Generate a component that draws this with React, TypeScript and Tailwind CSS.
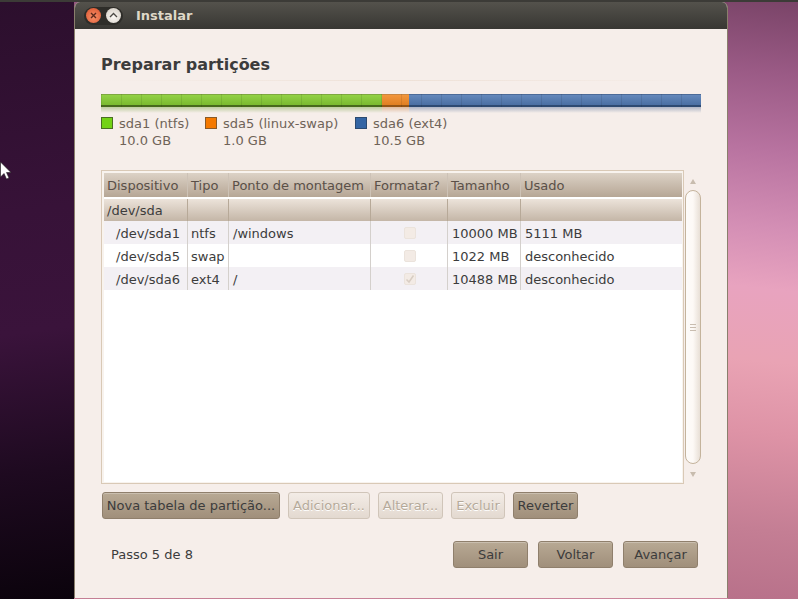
import React from "react";

const btnOn = "h-[27px] rounded-[3px] border border-[#8f7f6c] bg-gradient-to-b from-[#b8a994] to-[#a08f7b] text-[#3c3c3c] flex items-center justify-center shadow-[inset_0_1px_0_rgba(255,255,255,0.25)]";
const btnOff = "h-[27px] rounded-[3px] border border-[#d0c5b9] bg-gradient-to-b from-[#f3ece6] to-[#e3d9d0] text-[#b5a999] [text-shadow:0_1px_0_#ffffff] flex items-center justify-center";

const cols = ["w-[84px]", "w-[41px]", "w-[142px]", "w-[77px]", "w-[73px]", "flex-1"];
const headers = ["Dispositivo", "Tipo", "Ponto de montagem", "Formatar?", "Tamanho", "Usado"];

const Check = ({ checked }: { checked?: boolean }) => (
  <div className="w-[12px] h-[12px] rounded-[2px] border border-[#ebe3dc] bg-[#f3ebe5] flex items-center justify-center">
    {checked && (
      <svg width="10" height="10" viewBox="0 0 10 10">
        <path d="M1.5 5.5 L4 8 L8.5 1.5" fill="none" stroke="#d8cdc3" strokeWidth="1.5" />
      </svg>
    )}
  </div>
);

const rows = [
  { d: "/dev/sda1", t: "ntfs", p: "/windows", s: "10000 MB", u: "5111 MB", bg: "bg-[#f3f0f4]" },
  { d: "/dev/sda5", t: "swap", p: "", s: "1022 MB", u: "desconhecido", bg: "bg-white" },
  { d: "/dev/sda6", t: "ext4", p: "/", s: "10488 MB", u: "desconhecido", bg: "bg-[#f3f0f4]", checked: true },
];

const Legend = ({ color, border, name, size, w }: { color: string; border: string; name: string; size: string; w: string }) => (
  <div className={`flex ${w}`}>
    <div className={`w-[12px] h-[12px] mt-[1px] border ${color} ${border}`} />
    <div className="ml-[6px] text-[#6f6358] leading-[17px] -mt-[1px]">
      <div>{name}</div>
      <div>{size}</div>
    </div>
  </div>
);

export default function App() {
  return (
    <div className="relative w-[798px] h-[599px] overflow-hidden flex flex-col bg-[#3c3b37] text-[13px]" style={{ fontFamily: '"DejaVu Sans", sans-serif' }}>
      <div className="h-[2px] shrink-0 bg-[#3c3b37]" />
      <div className="flex flex-1 min-h-0">
        <div className="w-[74px] shrink-0 bg-[linear-gradient(172deg,#2c0f2d_0%,#371238_35%,#3a133b_55%,#1e0a20_78%,#0b030c_100%)]" />

        <div className="w-[654px] shrink-0 flex flex-col bg-[linear-gradient(186deg,#7a4468_0%,#b873a0_25%,#e8a3bf_50%,#c47e94_100%)]">
          <div className="h-[596px] flex flex-col rounded-t-[6px] overflow-hidden border-x border-[#8a7f6c] bg-[#f6eeea]">
            <div className="h-[27px] shrink-0 flex items-center bg-gradient-to-b from-[#54524c] to-[#383733] pl-[9px]">
              <div className="flex items-center gap-[5px] h-[18px] px-[2px] rounded-full bg-[#2e2d29]">
                <div className="w-[15px] h-[15px] rounded-full bg-[radial-gradient(circle_at_50%_60%,#f89068,#d9512c)] flex items-center justify-center">
                  <svg width="7" height="7" viewBox="0 0 7 7"><path d="M1 1 L6 6 M6 1 L1 6" stroke="#5d2a1c" strokeWidth="1.4" /></svg>
                </div>
                <div className="w-[15px] h-[15px] rounded-full bg-[radial-gradient(circle_at_50%_60%,#fbf8f4,#cfc9bf)] flex items-center justify-center">
                  <svg width="9" height="7" viewBox="0 0 9 7"><path d="M1 5 L4.5 1.5 L8 5" fill="none" stroke="#4a4843" strokeWidth="1.3" /></svg>
                </div>
              </div>
              <span className="ml-[13px] mt-[1px] font-bold text-[#dfd8c8]">Instalar</span>
            </div>

            <div className="flex-1 flex flex-col pl-[26px] pr-[26px]">
              <div className="mt-[26px] text-[16px] font-bold leading-[19px] text-[#3c3c3c]">Preparar partições</div>
              <div className="mt-[6px] h-px bg-gradient-to-r from-[#f6eeea] via-[#eee1d7] to-[#f6eeea]" />

              <div className="relative mt-[13px] flex h-[13px] w-[600px]">
                <div className="w-[281px] border-t border-b-2 border-t-[#7ea83f] border-b-[#47691c] bg-gradient-to-b from-[#92d145] to-[#7aba2f]" />
                <div className="w-[27px] border-t border-b-2 border-t-[#c98540] border-b-[#955516] bg-gradient-to-b from-[#f2963c] to-[#e07f22]" />
                <div className="flex-1 border-t border-b-2 border-t-[#4c6b98] border-b-[#2d4a72] bg-gradient-to-b from-[#6488bb] to-[#4a6fa3]" />
                <div className="absolute inset-0 [background-position:1px_0] bg-[repeating-linear-gradient(90deg,transparent_0,transparent_19px,rgba(0,0,0,0.09)_19px,rgba(0,0,0,0.09)_20px)]" />
              </div>
              <div className="flex h-[6px] w-[600px] opacity-40">
                <div className="w-[281px] bg-gradient-to-b from-[#6a9a30] to-transparent" />
                <div className="w-[27px] bg-gradient-to-b from-[#c07030] to-transparent" />
                <div className="flex-1 bg-gradient-to-b from-[#44618f] to-transparent" />
              </div>

              <div className="mt-[3px] flex">
                <Legend w="w-[104px]" color="bg-[#73d216]" border="border-[#4a6f24]" name="sda1 (ntfs)" size="10.0 GB" />
                <Legend w="w-[150px]" color="bg-[#f57900]" border="border-[#8a5a28]" name="sda5 (linux-swap)" size="1.0 GB" />
                <Legend w="w-[120px]" color="bg-[#3465a4]" border="border-[#2c4a70]" name="sda6 (ext4)" size="10.5 GB" />
              </div>

              <div className="mt-[21px] flex h-[314px]">
                <div className="w-[583px] border border-[#d9c9b6] pl-[2px] pt-[2px] pr-[1px] pb-[1px] bg-[#f8f3ee] flex flex-col">
                  <div className="flex-1 bg-white flex flex-col">
                    <div className="flex h-[24px] bg-gradient-to-b from-[#dcd2c6] to-[#b6a695] text-[#5a5048]">
                      {headers.map((h, i) => (
                        <div key={h} className={`${cols[i]} border-r border-[#cdc2b6] last:border-r-0 pl-[3px] pt-[2px] flex items-center`}>{h}</div>
                      ))}
                    </div>
                    <div className="flex h-[22px] mt-[2px] bg-gradient-to-b from-[#ece3da] to-[#c4b6a7] text-[#3c3c3c]">
                      {headers.map((h, i) => (
                        <div key={h} className={`${cols[i]} border-r border-[#b7a998] last:border-r-0 pl-[3px] pt-[2px] flex items-center`}>{i === 0 ? "/dev/sda" : ""}</div>
                      ))}
                    </div>
                    {rows.map((r) => (
                      <div key={r.d} className={`flex h-[23px] text-[#3c3c3c] ${r.bg}`}>
                        <div className={`${cols[0]} border-r border-[#d4d0cc] pl-[12px] pt-[2px] flex items-center`}>{r.d}</div>
                        <div className={`${cols[1]} border-r border-[#d4d0cc] pl-[3px] pt-[2px] flex items-center`}>{r.t}</div>
                        <div className={`${cols[2]} border-r border-[#d4d0cc] pl-[4px] pt-[2px] flex items-center`}>{r.p}</div>
                        <div className={`${cols[3]} border-r border-[#d4d0cc] pl-[2px] pt-[1px] flex items-center justify-center`}><Check checked={r.checked} /></div>
                        <div className={`${cols[4]} border-r border-[#d4d0cc] pl-[4px] pt-[2px] flex items-center`}>{r.s}</div>
                        <div className={`${cols[5]} pl-[4px] pt-[2px] flex items-center`}>{r.u}</div>
                      </div>
                    ))}
                  </div>
                </div>
                <div className="w-[16px] ml-[1px] flex flex-col items-center">
                  <div className="mt-[9px] w-0 h-0 border-x-[3px] border-x-transparent border-b-[5px] border-b-[#c8bcae]" />
                  <div className="mt-[6px] w-[16px] h-[274px] rounded-[8px] border border-[#c4b39c] bg-gradient-to-r from-[#fdfbf9] via-[#fdf9f6] to-[#e8dfd6] flex items-center justify-center">
                    <div className="mt-[1px] w-[6px] h-[7px] bg-[repeating-linear-gradient(180deg,#c9bdb0_0,#c9bdb0_1px,transparent_1px,transparent_3px)]" />
                  </div>
                  <div className="mt-[8px] w-0 h-0 border-x-[3px] border-x-transparent border-t-[5px] border-t-[#c8bcae]" />
                </div>
              </div>

              <div className="mt-[8px] ml-[1px] flex">
                <div className={`${btnOn} w-[178px]`}>Nova tabela de partição...</div>
                <div className={`${btnOff} w-[82px] ml-[8px]`}>Adicionar...</div>
                <div className={`${btnOff} w-[65px] ml-[8px]`}>Alterar...</div>
                <div className={`${btnOff} w-[54px] ml-[8px]`}>Excluir</div>
                <div className={`${btnOn} w-[65px] ml-[8px]`}>Reverter</div>
              </div>

              <div className="mt-[22px] flex items-center pr-[3px]">
                <div className="ml-[10px] flex-1 text-[#3c3c3c]">Passo 5 de 8</div>
                <div className={`${btnOn} w-[75px]`}>Sair</div>
                <div className={`${btnOn} w-[75px] ml-[10px]`}>Voltar</div>
                <div className={`${btnOn} w-[75px] ml-[10px]`}>Avançar</div>
              </div>
            </div>
          </div>
        </div>

        <div className="flex-1 bg-[linear-gradient(186deg,#7a4468_0%,#9a5a85_12%,#b873a0_25%,#d48fb5_38%,#e8a3bf_48%,#e9a3b4_60%,#de93a6_72%,#c47e94_88%,#b8718a_100%)]" />
      </div>

      <svg className="absolute left-0 top-[161px]" width="12" height="20" viewBox="0 0 12 20">
        <path d="M0.5 1 L0.5 16 L4 12.5 L6.5 18 L9 17 L6.5 11.5 L11 11.5 Z" fill="#fff" stroke="#222" strokeWidth="0.6" />
      </svg>
    </div>
  );
}
